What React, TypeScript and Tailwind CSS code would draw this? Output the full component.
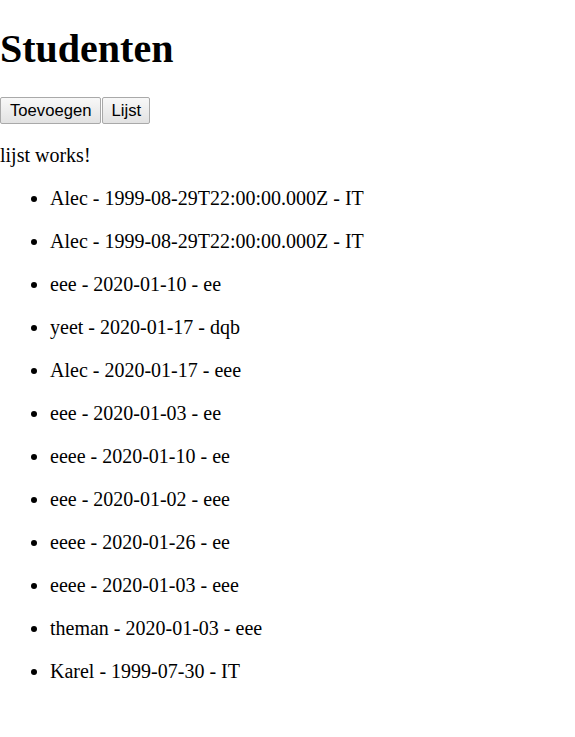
export default function App() {
  // Student entries shown in the list
  const studenten = [
    'Alec - 1999-08-29T22:00:00.000Z - IT',
    'Alec - 1999-08-29T22:00:00.000Z - IT',
    'eee - 2020-01-10 - ee',
    'yeet - 2020-01-17 - dqb',
    'Alec - 2020-01-17 - eee',
    'eee - 2020-01-03 - ee',
    'eeee - 2020-01-10 - ee',
    'eee - 2020-01-02 - eee',
    'eeee - 2020-01-26 - ee',
    'eeee - 2020-01-03 - eee',
    'theman - 2020-01-03 - eee',
    'Karel - 1999-07-30 - IT',
  ];

  return (
    <div className="min-h-screen bg-white text-black text-[20px] leading-[23px] font-['Liberation_Serif','Times_New_Roman',serif] pt-[26px]">
      {/* Header */}
      <h1 className="text-[40px] leading-[46px] font-bold">Studenten</h1>

      {/* Navigation */}
      <div className="mt-[25px] flex">
        <button className="h-[27px] pl-[9px] pr-[8px] border border-[#a9a9a9] rounded-[2px] bg-gradient-to-b from-[#f8f8f8] to-[#e2e2e2] text-[16.67px] leading-[19px] font-['Liberation_Sans',Arial,sans-serif]">
          Toevoegen
        </button>
        <button className="ml-px h-[27px] pl-[9px] pr-[8px] border border-[#a9a9a9] rounded-[2px] bg-gradient-to-b from-[#f8f8f8] to-[#e2e2e2] text-[16.67px] leading-[19px] font-['Liberation_Sans',Arial,sans-serif]">
          Lijst
        </button>
      </div>

      {/* Lijst */}
      <p className="mt-[20px]">lijst works!</p>
      <ul className="mt-[20px] pl-[50px] list-disc flex flex-col gap-[20px]">
        {studenten.map((s, i) => (
          <li key={i}>
            <p>{s}</p>
          </li>
        ))}
      </ul>
    </div>
  );
}
